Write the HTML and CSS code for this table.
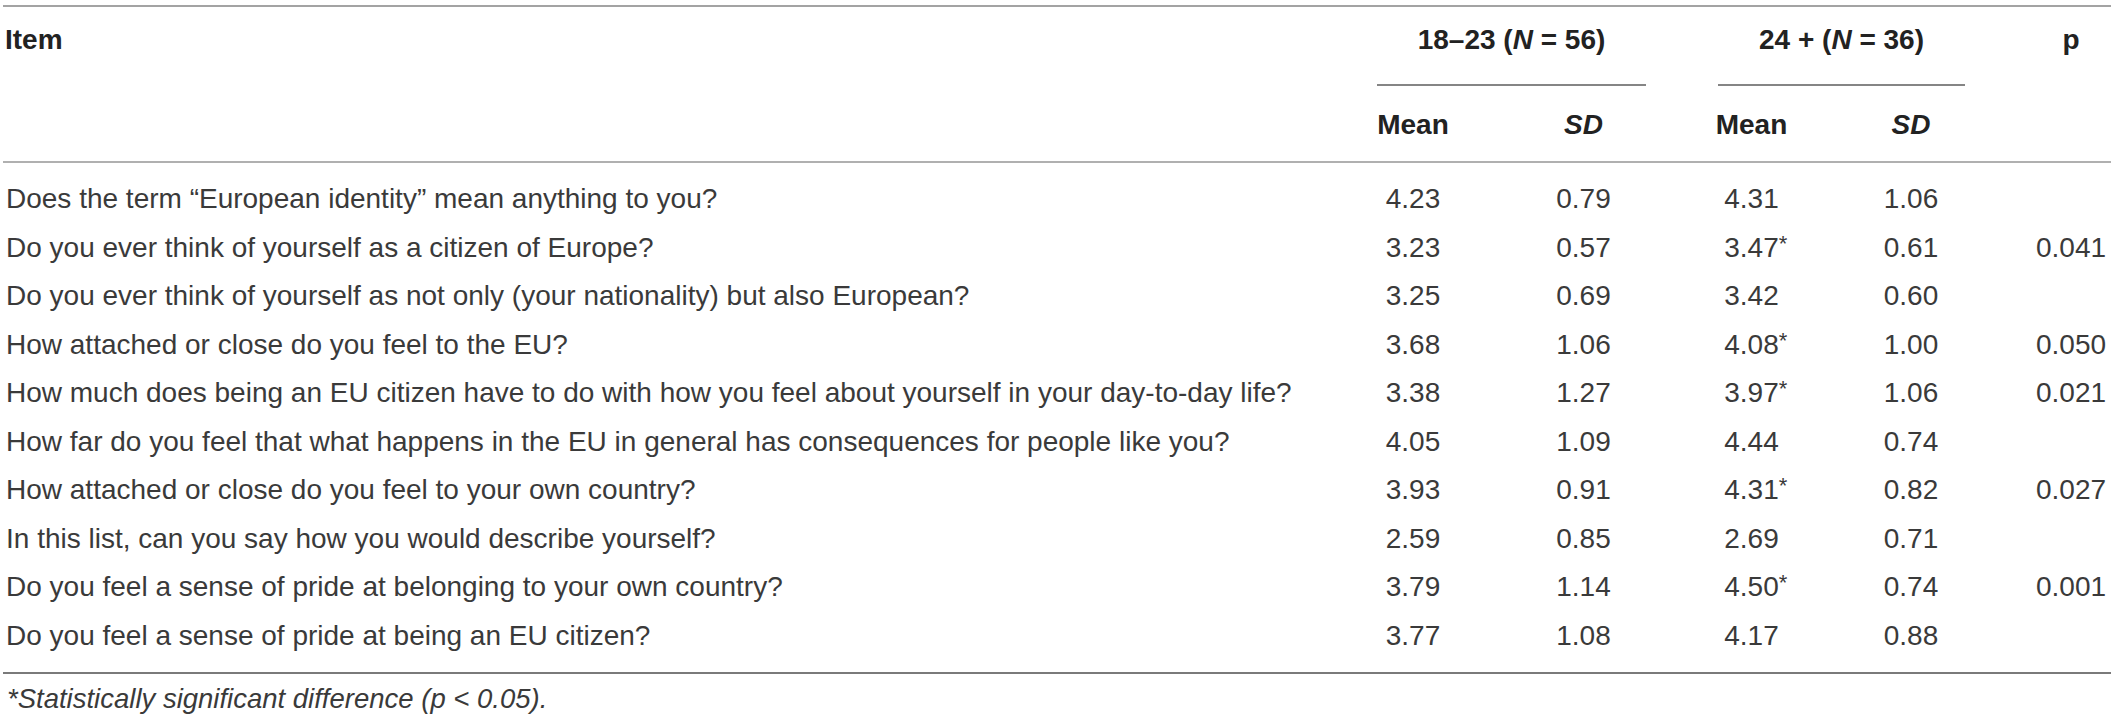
FILE: index.html
```html
<!DOCTYPE html>
<html lang="en">
<head>
<meta charset="utf-8">
<title>Table</title>
<link rel="stylesheet" href="styles.css">
</head>
<body>
<div class="wrap">
<table class="data">
  <colgroup>
    <col class="c-item">
    <col class="c-m1">
    <col class="c-s1">
    <col class="c-m2">
    <col class="c-s2">
    <col class="c-p">
  </colgroup>
  <thead>
    <tr class="h1">
      <th class="item-h" rowspan="2">Item</th>
      <th class="grp" colspan="2"><div class="grp-label">18–23 (<i>N</i> = 56)</div><div class="grp-rule"></div></th>
      <th class="grp" colspan="2"><div class="grp-label">24 + (<i>N</i> = 36)</div><div class="grp-rule"></div></th>
      <th class="p-h" rowspan="2">p</th>
    </tr>
    <tr class="h2">
      <th>Mean</th>
      <th><i>SD</i></th>
      <th>Mean</th>
      <th><i>SD</i></th>
    </tr>
  </thead>
  <tbody>
    <tr class="first">
      <td class="item">Does the term “European identity” mean anything to you?</td>
      <td>4.23</td><td>0.79</td><td>4.31</td><td>1.06</td><td class="p"></td>
    </tr>
    <tr>
      <td class="item">Do you ever think of yourself as a citizen of Europe?</td>
      <td>3.23</td><td>0.57</td><td>3.47<span class="star">*</span></td><td>0.61</td><td class="p">0.041</td>
    </tr>
    <tr>
      <td class="item">Do you ever think of yourself as not only (your nationality) but also European?</td>
      <td>3.25</td><td>0.69</td><td>3.42</td><td>0.60</td><td class="p"></td>
    </tr>
    <tr>
      <td class="item">How attached or close do you feel to the EU?</td>
      <td>3.68</td><td>1.06</td><td>4.08<span class="star">*</span></td><td>1.00</td><td class="p">0.050</td>
    </tr>
    <tr>
      <td class="item">How much does being an EU citizen have to do with how you feel about yourself in your day-to-day life?</td>
      <td>3.38</td><td>1.27</td><td>3.97<span class="star">*</span></td><td>1.06</td><td class="p">0.021</td>
    </tr>
    <tr>
      <td class="item">How far do you feel that what happens in the EU in general has consequences for people like you?</td>
      <td>4.05</td><td>1.09</td><td>4.44</td><td>0.74</td><td class="p"></td>
    </tr>
    <tr>
      <td class="item">How attached or close do you feel to your own country?</td>
      <td>3.93</td><td>0.91</td><td>4.31<span class="star">*</span></td><td>0.82</td><td class="p">0.027</td>
    </tr>
    <tr>
      <td class="item">In this list, can you say how you would describe yourself?</td>
      <td>2.59</td><td>0.85</td><td>2.69</td><td>0.71</td><td class="p"></td>
    </tr>
    <tr>
      <td class="item">Do you feel a sense of pride at belonging to your own country?</td>
      <td>3.79</td><td>1.14</td><td>4.50<span class="star">*</span></td><td>0.74</td><td class="p">0.001</td>
    </tr>
    <tr class="last">
      <td class="item">Do you feel a sense of pride at being an EU citizen?</td>
      <td>3.77</td><td>1.08</td><td>4.17</td><td>0.88</td><td class="p"></td>
    </tr>
  </tbody>
</table>
<p class="note">*Statistically significant difference (p &lt; 0.05).</p>
</div>
</body>
</html>
```
FILE: styles.css
```css
html, body {
  margin: 0;
  padding: 0;
  background: #ffffff;
}

body {
  font-family: "Liberation Sans", Arial, Helvetica, sans-serif;
  font-size: 28px;
  color: #3a3a3a;
}

.wrap {
  padding: 5px 6px 0 3px;
}

.data {
  width: 2108px;
  table-layout: fixed;
  border-collapse: collapse;
  border-top: 2px solid #a3a3a3;
  border-bottom: 2px solid #7a7a7a;
}

.c-item { width: 1338px; }
.c-m1 { width: 144px; }
.c-s1 { width: 197px; }
.c-m2 { width: 139px; }
.c-s2 { width: 180px; }
.c-p { width: 110px; }

th, td {
  padding: 0;
  line-height: 48.5px;
  text-align: center;
  white-space: nowrap;
}

thead th {
  font-weight: bold;
  color: #222222;
}

thead th i {
  font-style: italic;
}

.h1 th {
  padding-top: 9px;
  vertical-align: top;
}

.item-h {
  text-align: left;
  padding-left: 2px;
}

.p-h {
  padding-left: 30px;
}

.grp-rule {
  margin: 19px 36px 0 36px;
  border-top: 2px solid #858585;
}

.h2 th {
  padding-top: 15px;
  padding-bottom: 12px;
}

thead tr.h2 {
  border-bottom: 2px solid #b0b0b0;
}

thead .item-h,
thead .p-h {
  border-bottom: 2px solid #b0b0b0;
}

td.item {
  text-align: left;
  padding-left: 3px;
}

td.p {
  padding-left: 30px;
}

.star {
  display: inline-block;
  width: 0;
  text-align: left;
  font-size: 22px;
  vertical-align: top;
  line-height: 40px;
}

tr.first td {
  padding-top: 12px;
}

tr.last td {
  padding-bottom: 12px;
}

.note {
  margin: 8px 0 0 4px;
  font-style: italic;
  font-size: 27.5px;
  line-height: 34px;
}
```
